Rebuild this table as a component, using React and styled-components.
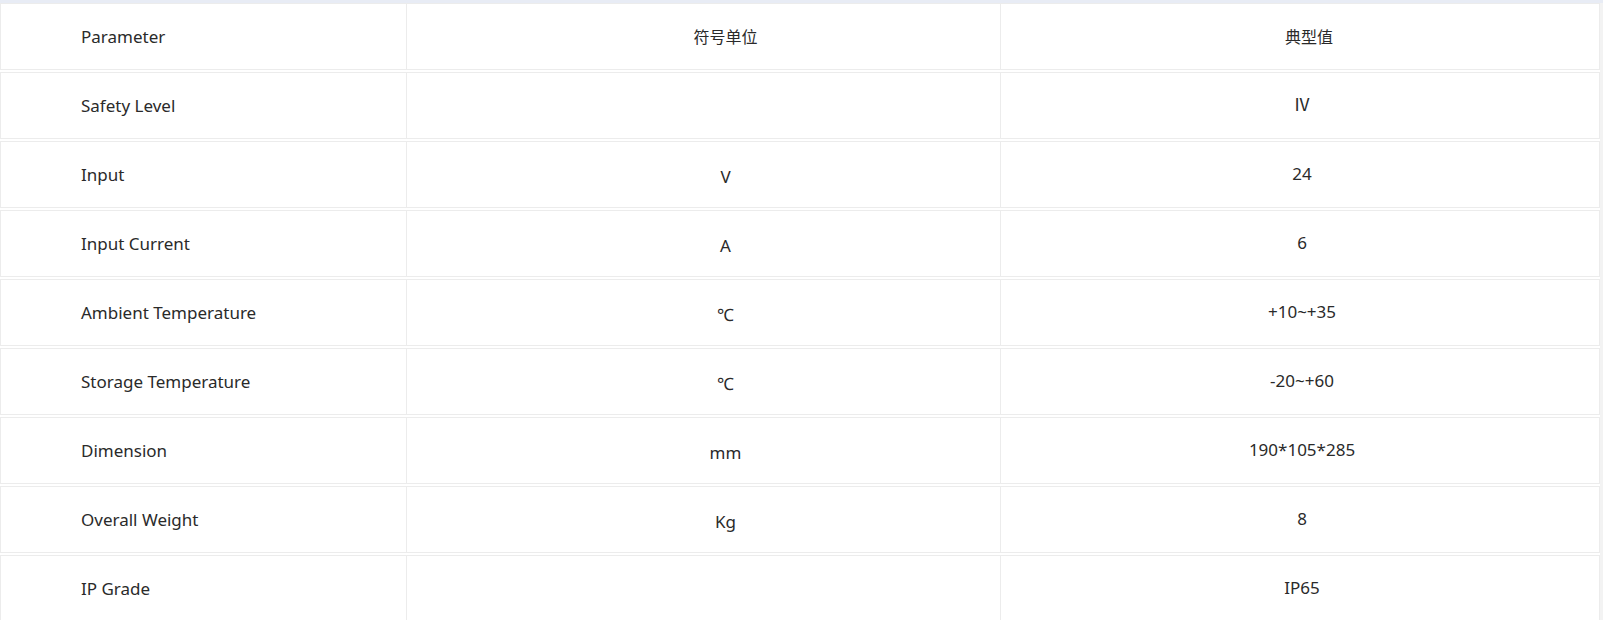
import React from "react";
import styled, { createGlobalStyle } from "styled-components";

const Global = createGlobalStyle`
  html, body { margin: 0; padding: 0; background: #ffffff; }
  body { font-family: "Noto Sans", "Noto Sans CJK SC", sans-serif; color: #2a2a2a; }
`;

const Frame = styled.div`
  width: 1603px;
  height: 620px;
  overflow: hidden;
  box-sizing: border-box;
  border-top: 3px solid #e8ecf5;
  background: #f3f3f3;
`;

const Table = styled.table`
  width: 1600px;
  border-collapse: separate;
  border-spacing: 0 2px;
  margin-top: -2px;
  background: #fff;
  table-layout: fixed;
`;

const Col = styled.col`
  width: ${(p) => p.$w}px;
`;

const Cell = styled.td`
  box-sizing: border-box;
  height: 67px;
  border: 1px solid #ececec;
  border-left: 0;
  font-size: 17px;
  line-height: 20px;
  color: #2a2a2a;
  vertical-align: middle;
  text-align: center;
  padding: 0;
`;

const NameCell = styled(Cell)`
  border-left: 1px solid #ececec;
  text-align: left;
  padding-left: 80px;
`;

const UnitCell = styled(Cell)`
  font-size: ${(p) => (p.$head ? "16px" : "17px")};
  padding: ${(p) => (p.$head ? "0 0 0 44px" : "5px 0 0 44px")};
`;

const ValueCell = styled(Cell)`
  font-size: ${(p) => (p.$head ? "16px" : "17px")};
  padding: ${(p) => (p.$head ? "0 0 0 18px" : "0 0 1px 4px")};
`;

const rows = [
  ["Parameter", "符号单位", "典型值"],
  ["Safety Level", "", "Ⅳ"],
  ["Input", "V", "24"],
  ["Input Current", "A", "6"],
  ["Ambient Temperature", "℃", "+10~+35"],
  ["Storage Temperature", "℃", "-20~+60"],
  ["Dimension", "mm", "190*105*285"],
  ["Overall Weight", "Kg", "8"],
  ["IP Grade", "", "IP65"],
];

export default function App() {
  return (
    <>
      <Global />
      <Frame>
        <Table>
          <colgroup>
            <Col $w={407} />
            <Col $w={594} />
            <Col $w={599} />
          </colgroup>
          <tbody>
            {rows.map((r, i) => (
              <tr key={i}>
                <NameCell>{r[0]}</NameCell>
                <UnitCell $head={i === 0}>{r[1]}</UnitCell>
                <ValueCell $head={i === 0}>{r[2]}</ValueCell>
              </tr>
            ))}
          </tbody>
        </Table>
      </Frame>
    </>
  );
}
